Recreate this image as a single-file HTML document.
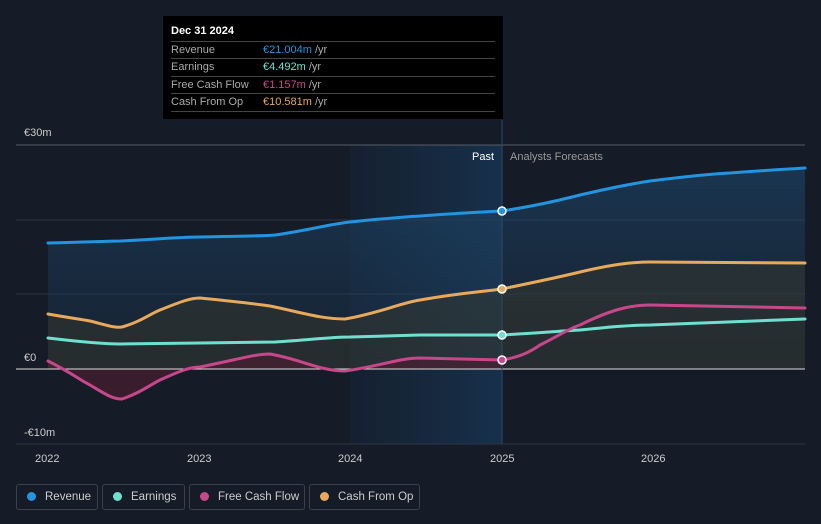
<!DOCTYPE html><html><head><style>
html,body{margin:0;width:821px;height:524px;overflow:hidden}
body{background:#151b27;font-family:"Liberation Sans",sans-serif;position:relative}
.tt{position:absolute;left:163px;top:16px;width:340px;height:103px;background:#000;color:#fff;font-size:11px}
.tt .h{position:absolute;left:8px;top:9px;font-weight:bold}
.row{position:absolute;left:8px;width:324px;border-top:1px solid #444;height:17px;line-height:17px;color:#aaa}
.row span{position:absolute;left:92px}
.lg{position:absolute;top:484px;height:26px;border:1px solid #3a4050;border-radius:3px;color:#ccc;font-size:11.5px;line-height:24px;box-sizing:border-box;white-space:nowrap}
.lg i{display:inline-block;width:9px;height:9px;border-radius:50%;margin:0 9px 0 10px;vertical-align:-1px}
</style></head><body>
<svg width="821" height="524" style="position:absolute;left:0;top:0">
<defs>
<linearGradient id="hl" x1="0" x2="1"><stop offset="0" stop-color="#152030"/><stop offset="1" stop-color="#17304a"/></linearGradient>
<linearGradient id="rv" x1="0" y1="0" x2="0" y2="1"><stop offset="0" stop-color="#1d4a70" stop-opacity=".8"/><stop offset="1" stop-color="#1d3550" stop-opacity=".4"/></linearGradient>
</defs>
<rect x="350" y="145" width="152" height="299" fill="url(#hl)"/>
<g stroke="#2e3644" stroke-width="1">
<line x1="16" y1="145" x2="805" y2="145" stroke="#555c68"/><line x1="16" y1="220" x2="805" y2="220"/><line x1="16" y1="294" x2="805" y2="294"/><line x1="16" y1="444" x2="805" y2="444"/></g>
<path d="M48,243 C90,242 110,241 120,241 C160,239 180,237 200,237 C250,236 265,236 275,235 C310,230 330,224 350,222 C390,218 400,217 420,216 C460,213 480,212 502,211 C540,205 560,200 580,195 C610,188 630,184 650,181 C690,176 710,174 730,173 C770,170 790,169 805,168 L805,369 L48,369Z" fill="url(#rv)" opacity=".7"/>
<path d="M48,314 C70,318 80,319 90,321 C110,326 115,328 122,327 C140,322 150,314 160,310 C180,302 190,298 200,298 C240,302 250,303 270,306 C300,312 320,319 345,319 C380,313 400,303 420,300 C460,293 480,292 502,289 C540,281 560,277 580,272 C610,265 630,262 650,262 L805,263 L805,369 L48,369Z" fill="#3a3a2a" opacity=".45"/>
<path d="M48,361 C70,372 80,380 90,385 C105,394 112,399 122,399 C140,393 150,385 160,380 C180,371 190,367 200,367 C240,359 255,354 270,354 C300,359 320,371 345,371 C380,366 400,358 420,358 L502,360 L502,369 L48,369Z" fill="#4a1e30" opacity=".7"/>
<line x1="16" y1="369" x2="805" y2="369" stroke="#ddd" stroke-width="1"/>
<line x1="502" y1="120" x2="502" y2="444" stroke="#2b4a66"/>
<g fill="none" stroke-width="3" stroke-linecap="round">
<path d="M48,243 C90,242 110,241 120,241 C160,239 180,237 200,237 C250,236 265,236 275,235 C310,230 330,224 350,222 C390,218 400,217 420,216 C460,213 480,212 502,211 C540,205 560,200 580,195 C610,188 630,184 650,181 C690,176 710,174 730,173 C770,170 790,169 805,168" stroke="#2394df"/>
<path d="M48,314 C70,318 80,319 90,321 C110,326 115,328 122,327 C140,322 150,314 160,310 C180,302 190,298 200,298 C240,302 250,303 270,306 C300,312 320,319 345,319 C380,313 400,303 420,300 C460,293 480,292 502,289 C540,281 560,277 580,272 C610,265 630,262 650,262 L805,263" stroke="#e8a95b"/>
<path d="M48,338 C90,343 110,344 120,344 L200,343 L275,342 C310,340 330,337 350,337 L420,335 L502,335 C540,333 560,331 580,330 C610,327 630,325 650,325 L805,319" stroke="#6fe0cf"/>
<path d="M48,361 C70,372 80,380 90,385 C105,394 112,399 122,399 C140,393 150,385 160,380 C180,371 190,367 200,367 C240,359 255,354 270,354 C300,359 320,371 345,371 C380,366 400,358 420,358 L502,360 C520,357 530,352 540,345 C560,335 570,328 580,325 C610,310 630,305 650,305 L805,308" stroke="#c8478a"/>
</g>
<g stroke="#fff" stroke-width="1.5"><circle cx="502" cy="211" r="4" fill="#2394df"/><circle cx="502" cy="289" r="4" fill="#e8a95b"/><circle cx="502" cy="335" r="4" fill="#6fe0cf"/><circle cx="502" cy="360" r="4" fill="#c8478a"/></g>
<g font-size="11" fill="#ccc"><text x="24" y="136">€30m</text><text x="24" y="361">€0</text><text x="24" y="436">-€10m</text>
<text x="35" y="462">2022</text><text x="187" y="462">2023</text><text x="338" y="462">2024</text><text x="490" y="462">2025</text><text x="641" y="462">2026</text>
<text x="472" y="160" fill="#fff">Past</text><text x="510" y="160" fill="#999">Analysts Forecasts</text></g>
</svg>
<div class="tt"><div class="h">Dec 31 2024</div>
<div class="row" style="top:25px">Revenue<span><b style="font-weight:normal;color:#2394df">€21.004m</b> /yr</span></div>
<div class="row" style="top:42px">Earnings<span><b style="font-weight:normal;color:#6fe0cf">€4.492m</b> /yr</span></div>
<div class="row" style="top:60px">Free Cash Flow<span><b style="font-weight:normal;color:#c8478a">€1.157m</b> /yr</span></div>
<div class="row" style="top:77px;border-bottom:1px solid #444">Cash From Op<span><b style="font-weight:normal;color:#e8a95b">€10.581m</b> /yr</span></div>
</div>
<div class="lg" style="left:16px;width:82px"><i style="background:#2394df"></i>Revenue</div>
<div class="lg" style="left:102px;width:83px"><i style="background:#6fe0cf"></i>Earnings</div>
<div class="lg" style="left:189px;width:116px"><i style="background:#c8478a"></i>Free Cash Flow</div>
<div class="lg" style="left:309px;width:111px"><i style="background:#e8a95b"></i>Cash From Op</div>
</body></html>
